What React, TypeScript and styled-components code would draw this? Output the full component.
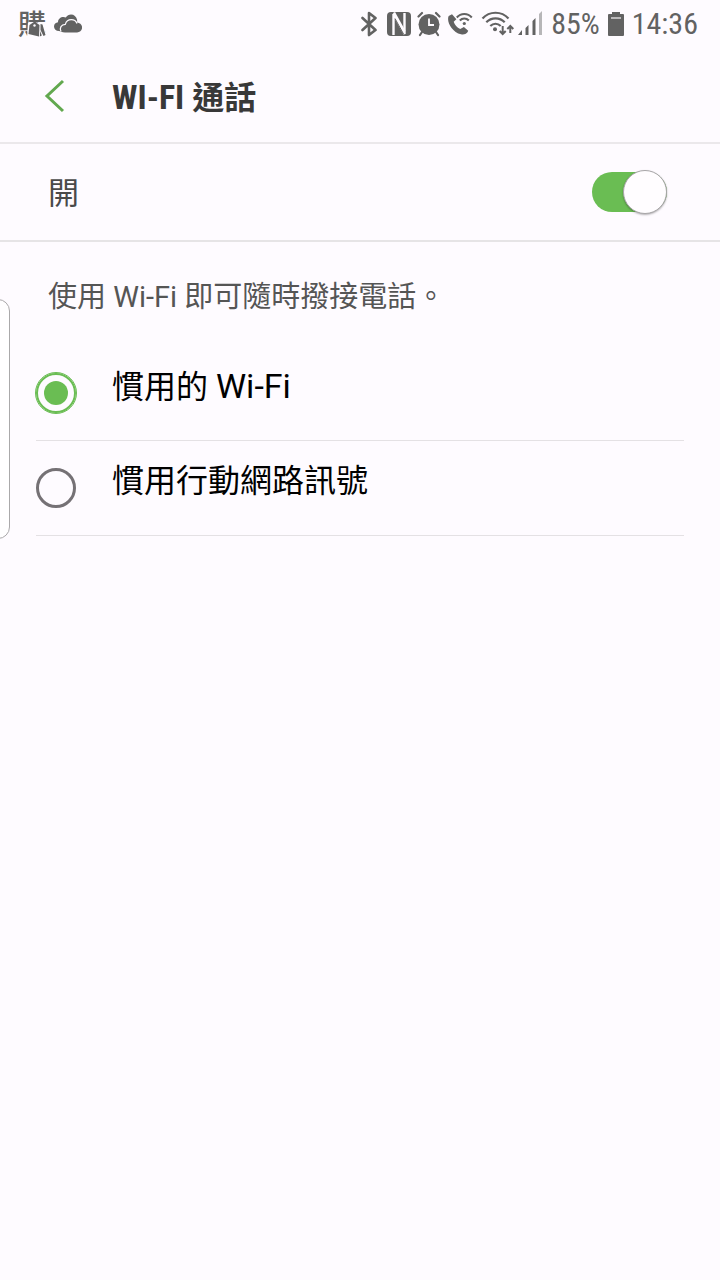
import React, { useState } from 'react';
import styled, { createGlobalStyle } from 'styled-components';

const GlobalStyle = createGlobalStyle`
  * { box-sizing: border-box; }
  body {
    margin: 0;
    background: #fefbff;
    color: #000;
    font-family: Roboto, "Noto Sans CJK TC", sans-serif;
  }
`;

const Screen = styled.div`
  position: relative;
  min-height: 100vh;
  overflow: hidden;
`;

const StatusBar = styled.header`
  display: flex;
  justify-content: space-between;
  align-items: center;
  height: 48px;
  padding: 0 22px 0 18px;
  color: #626262;
  font-family: "Roboto Condensed", Roboto, sans-serif;
  font-size: 30px;
  line-height: 50px;
`;

const Group = styled.div<{ $gap: number }>`
  display: flex;
  align-items: center;
  gap: ${(p) => p.$gap}px;

  svg { display: block; flex: none; }
`;

const ShopIcon = styled.span`
  position: relative;
  width: 28px;
  height: 48px;
  font: 500 28px/46px "Noto Sans CJK TC", sans-serif;

  svg { position: absolute; right: 0; top: 20px; }
`;

const TitleBar = styled.div`
  display: flex;
  align-items: center;
  height: 96px;
  padding: 2px 0 0 44px;
  border-bottom: 2px solid #ebe8eb;
`;

const BackButton = styled.button`
  width: 68px;
  height: 48px;
  padding: 0;
  border: 0;
  background: none;
  cursor: pointer;

  svg { display: block; }
`;

const Title = styled.h1`
  margin: 0;
  padding-top: 2px;
  color: #383838;
  font: 700 32px/48px "Roboto Condensed", Roboto, "Noto Sans CJK TC", sans-serif;
`;

const Latin = styled.span<{ $size: number }>`
  font-size: ${(p) => p.$size}px;
`;

const SwitchRow = styled.label`
  display: flex;
  align-items: center;
  justify-content: space-between;
  height: 98px;
  padding: 0 53px 0 48px;
  border-bottom: 2px solid #e6e4e6;
  color: #4a4a4a;
  font-size: 31px;
  line-height: 48px;
  cursor: pointer;
`;

const SwitchText = styled.span`
  padding-top: 4px;
`;

const Switch = styled.input`
  appearance: none;
  display: flex;
  align-items: center;
  width: 75px;
  height: 40px;
  margin: 0;
  border-radius: 20px;
  background: #c4c2c4;

  &::before {
    content: "";
    flex: none;
    width: 42px;
    height: 42px;
    border: 1px solid #a8a6a8;
    border-radius: 50%;
    background: #fffdff;
    box-shadow: 0 1px 2px rgba(0, 0, 0, 0.3);
  }

  &:checked {
    justify-content: flex-end;
    background: #6abd53;
  }
`;

const Description = styled.p`
  margin: 0;
  padding: 31px 48px 25px;
  color: #555;
  font-size: 29px;
  line-height: 48px;
`;

const Options = styled.fieldset`
  margin: 0 36px;
  padding: 0;
  border: 0;
`;

const Option = styled.label`
  display: flex;
  align-items: center;
  height: 95px;
  border-bottom: 1px solid #e4e1e4;
  font-size: 32px;
  line-height: 48px;
  cursor: pointer;
`;

const Radio = styled.input`
  appearance: none;
  flex: none;
  display: grid;
  place-items: center;
  width: 40px;
  height: 40px;
  margin: 0 36px 0 0;
  border: 3px solid #757175;
  border-radius: 50%;

  &:checked {
    border: 2px solid #6abd53;
    outline: 1px solid #6abd53;
  }

  &:checked::before {
    content: "";
    width: 24px;
    height: 24px;
    border-radius: 50%;
    background: #6abd53;
  }
`;

const OptionText = styled.span`
  padding-bottom: 14px;
`;

const EdgeHandle = styled.div`
  position: absolute;
  left: -20px;
  top: 299px;
  width: 30px;
  height: 240px;
  border: 1px solid #aaa8aa;
  border-radius: 12px;
  background: #fffeff;
`;

const TagIcon = () => (
  <svg width="19" height="18" viewBox="0 0 19 18" aria-hidden="true">
    <path d="M1 2.500h17L19 18H0z" fill="#fefbff" />
    <path d="m2.500 5 5-3.500 5 3.500-.5 11.500L1.500 14z" fill="currentColor" />
    <path d="m13.500 4 2 .5 3 10.500-2 1-3-6zM13.300 11l1.500 4.500-2 1z" fill="currentColor" />
    <path d="M8 4V0" stroke="currentColor" strokeWidth="1.500" />
    <circle cx="7.500" cy="5.500" r="1.200" fill="#fefbff" />
  </svg>
);

const CloudIcon = () => (
  <svg width="28" height="48" viewBox="0 0 28 48" fill="currentColor" aria-hidden="true">
    <path d="M5 31C2 31 0 29 0 26.500c0-2.500 1.800-4 4-4.300C4 19 6.500 17 9.500 17c.8 0 1.600.2 2.300.6C13 15.600 15 14.500 17 14.500c3 0 5.300 2 6 5 .2 1 .1 2 .1 3 3 .3 5 2.300 5 5 0 3-2 5-5 5H11c-3 0-5-1.500-6-1.500z" />
    <path d="M7 31.500c-1.800-3.500.3-7 4.300-7.200 1-3.300 3.200-4.600 6-4.600s4.700 1.300 5.700 3.800" fill="none" stroke="#fefbff" strokeWidth="1.200" />
  </svg>
);

const BluetoothIcon = () => (
  <svg width="20" height="48" viewBox="0 0 20 48" fill="none" stroke="currentColor" strokeWidth="2.600" strokeLinecap="round" strokeLinejoin="round" aria-hidden="true">
    <path d="m1.500 18 13 12-6.500 5V13l6.500 5-13 12" />
  </svg>
);

const NfcIcon = () => (
  <svg width="24" height="48" viewBox="0 0 24 48" aria-hidden="true">
    <rect y="12" width="24" height="24" rx="4" fill="currentColor" />
    <path d="M6.500 35V14L17.500 34V13" fill="none" stroke="#fefbff" strokeWidth="2.400" strokeLinejoin="bevel" />
    <path d="m7 12.500 10.500 19" stroke="#fefbff" strokeWidth="2.400" />
    <path d="m8 18.500 8.500 15.500" stroke="currentColor" strokeWidth="1" />
  </svg>
);

const AlarmIcon = () => (
  <svg width="24" height="48" viewBox="0 0 24 48" fill="none" stroke="currentColor" strokeLinecap="round" aria-hidden="true">
    <circle cx="12" cy="24.500" r="10.500" fill="currentColor" stroke="none" />
    <path d="m1.500 16.500 3.500-3.500M22.500 16.500 19 13M5 32l-2 3M19 32l2 3" strokeWidth="2.200" />
    <path d="M12 18.500v6.500h5" stroke="#fefbff" strokeWidth="1.800" strokeLinecap="butt" />
  </svg>
);

const WifiCallIcon = () => (
  <svg width="26" height="48" viewBox="0 0 26 48" fill="none" aria-hidden="true">
    <path d="M5 14.300 1.700 16C-.8 21 4.500 32 14 34.300c2.500.7 4.700 0 6.500-2l.7-1.600-4.300-3.800-3.700 2C10 27.500 7.700 25 6.700 21.700l2.700-2.500z" fill="currentColor" />
    <path d="M9.800 17.500c4-4.600 11-4.600 15 0M12.800 20.500c2.600-2.800 6.400-2.800 9 0" stroke="currentColor" strokeWidth="2" />
    <circle cx="17.300" cy="23.500" r="1.600" fill="currentColor" />
  </svg>
);

const WifiIcon = () => (
  <svg width="33" height="48" viewBox="0 0 33 48" fill="none" stroke="currentColor" strokeWidth="2.200" aria-hidden="true">
    <path d="M1.500 18.500c7-7.700 19-7.700 26 0M5.300 22.300c5-5.300 13.400-5.300 18.400 0M9.300 26c3-3 7.400-3 10.400 0" />
    <circle cx="14" cy="29.300" r="2" fill="currentColor" stroke="none" />
    <path d="M21.700 26v8m-3-3 3 3 3-3M29.300 33v-7m-3 3 3-3 3 3" strokeWidth="2" />
  </svg>
);

const SignalIcon = () => (
  <svg width="25" height="48" viewBox="0 0 25 48" fill="currentColor" aria-hidden="true">
    <path d="m0 35 4-5v5zM7.500 28l3-3v10h-3zM14.500 21l3-3v17h-3z" />
    <path d="m21 14 3-3v24h-3z" opacity=".45" />
  </svg>
);

const BatteryIcon = () => (
  <svg width="16" height="48" viewBox="0 0 16 48" aria-hidden="true">
    <path d="M4 12h8v2h3q1 0 1 1v20q0 1-1 1H1q-1 0-1-1V15q0-1 1-1h3z" fill="currentColor" />
    <path d="M3 18h10" stroke="#bbb9bb" strokeWidth="2" />
  </svg>
);

const options = [
  { value: 'wifi', text: '慣用的 ', latin: 'Wi-Fi' },
  { value: 'cellular', text: '慣用行動網路訊號', latin: '' },
];

export default function App() {
  const [enabled, setEnabled] = useState(true);
  const [preferred, setPreferred] = useState('wifi');

  return (
    <>
      <GlobalStyle />
      <Screen>
        <StatusBar>
          <Group $gap={8}>
            <ShopIcon>購<TagIcon /></ShopIcon>
            <CloudIcon />
          </Group>
          <Group $gap={8}>
            <Group $gap={6}>
              <BluetoothIcon />
              <NfcIcon />
              <AlarmIcon />
              <WifiCallIcon />
            </Group>
            <Group $gap={4}>
              <WifiIcon />
              <SignalIcon />
            </Group>
            <span>85%</span>
            <BatteryIcon />
            <time>14:36</time>
          </Group>
        </StatusBar>
        <TitleBar>
          <BackButton type="button" aria-label="返回">
            <svg width="24" height="48" viewBox="0 0 24 48" fill="none" stroke="#62a84f" strokeWidth="3">
              <path d="M19 9 3 24l16 15" />
            </svg>
          </BackButton>
          <Title><Latin $size={34}>WI-FI </Latin>通話</Title>
        </TitleBar>
        <main>
          <SwitchRow>
            <SwitchText>開</SwitchText>
            <Switch type="checkbox" role="switch" checked={enabled} onChange={(e) => setEnabled(e.target.checked)} />
          </SwitchRow>
          <Description>使用 Wi-Fi 即可隨時撥接電話。</Description>
          <Options aria-label="WI-FI 通話">
            {options.map((o) => (
              <Option key={o.value}>
                <Radio
                  type="radio"
                  name="preferred"
                  value={o.value}
                  checked={preferred === o.value}
                  onChange={() => setPreferred(o.value)}
                />
                <OptionText>{o.text}{o.latin && <Latin $size={34}>{o.latin}</Latin>}</OptionText>
              </Option>
            ))}
          </Options>
        </main>
        <EdgeHandle />
      </Screen>
    </>
  );
}
